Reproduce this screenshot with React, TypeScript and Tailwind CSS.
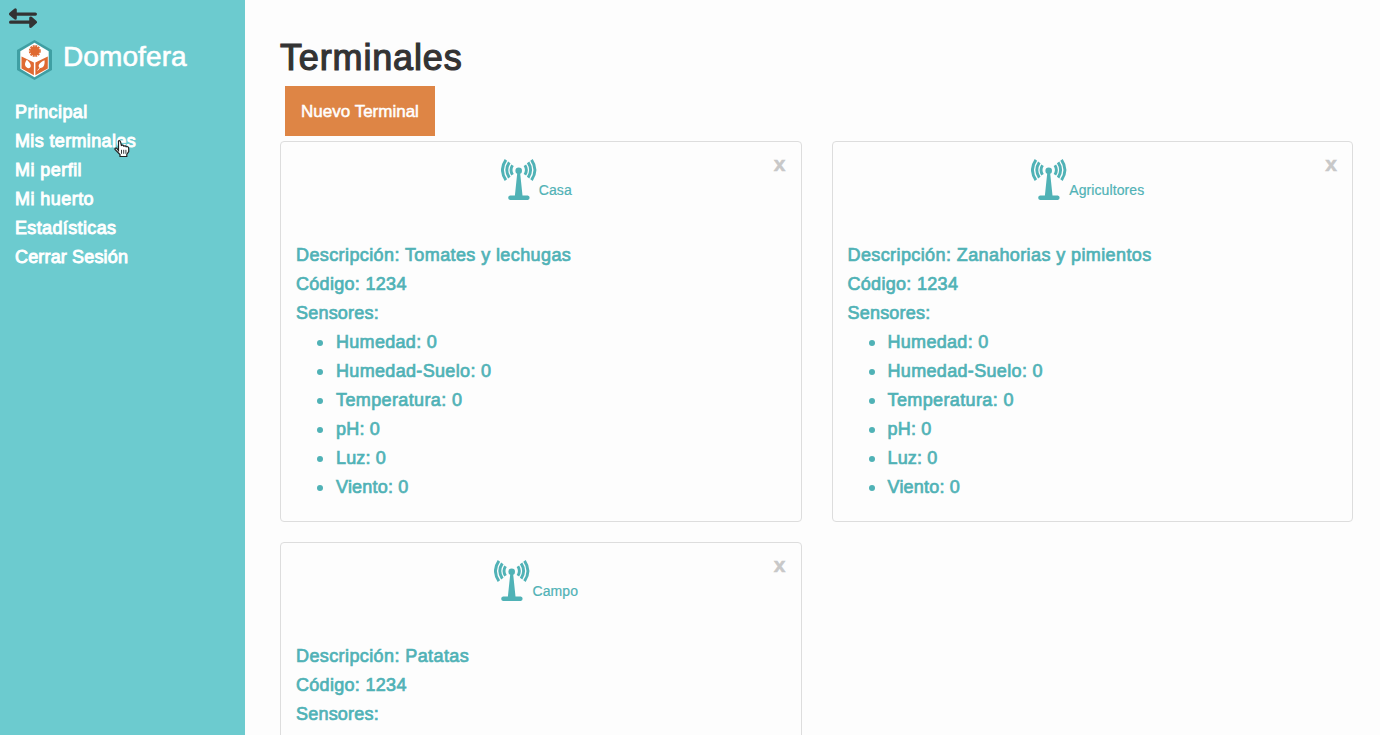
import React from "react";

type Terminal = { name: string; description: string; code: string };

const terminals: Terminal[] = [
  { name: "Casa", description: "Tomates y lechugas", code: "1234" },
  { name: "Agricultores", description: "Zanahorias y pimientos", code: "1234" },
  { name: "Campo", description: "Patatas", code: "1234" },
];

const sensors = [
  { label: "Humedad", spacing: "tracking-[0.3px]" },
  { label: "Humedad-Suelo", spacing: "tracking-[0.33px]" },
  { label: "Temperatura", spacing: "tracking-[0.38px]" },
  { label: "pH", spacing: "tracking-[0.2px]" },
  { label: "Luz", spacing: "tracking-[0.15px]" },
  { label: "Viento", spacing: "tracking-[0.2px]" },
];

const links = [
  { label: "Principal", spacing: "tracking-[0.4px]" },
  { label: "Mis terminales", spacing: "tracking-[0.36px]" },
  { label: "Mi perfil", spacing: "tracking-[0.45px]" },
  { label: "Mi huerto", spacing: "tracking-[0.45px]" },
  { label: "Estadísticas", spacing: "tracking-[0.36px]" },
  { label: "Cerrar Sesión", spacing: "tracking-[0.16px]" },
];

function ToggleIcon() {
  return (
    <svg width="28" height="20" viewBox="0 0 28 20" className="block" fill="#333" stroke="#333" strokeLinecap="round" strokeLinejoin="round">
      <path d="M1.500 6 6.300 1.800V10.200Z" strokeWidth="3" />
      <path d="M5 6.100H26.400M1.600 14.200H23" strokeWidth="3.200" />
      <path d="M26.500 14.200 21.700 10V18.400Z" strokeWidth="3" />
    </svg>
  );
}

function Logo() {
  return (
    <svg width="35" height="40" viewBox="0 0 35 40" className="block shrink-0">
      <path d="M17.500 0 35 10V30L17.500 40 0 30V10Z" fill="#3f9fa3" />
      <path d="M17.500 2.800 31.700 11.300V28.700L17.500 37.200 3.300 28.700V11.300Z" fill="#fff" />
      <circle cx="17.800" cy="11" r="4.800" fill="#df6a32" />
      <circle cx="17.800" cy="11" r="5.200" fill="none" stroke="#df6a32" strokeWidth="1.600" strokeDasharray="1.900 .823" />
      <path d="M4.500 16.500 16.900 22.500V35.300L4.500 28.600Z" fill="#df6a32" />
      <path d="M30.800 16.500 18.400 22.500V35.300L30.800 28.600Z" fill="#df6a32" />
      <path d="M9.800 19.800C11.500 21.500 13.800 23.500 13.800 25.800 13.800 28.300 11.300 28.800 9.500 27.300 7 25 8 22.500 9.800 19.800Z" fill="#fff" />
      <path d="M27.500 20.200C28.200 25.300 26 28.200 22.800 27.900 20.500 26.500 21.300 23 27.500 20.200Z" fill="#fff" />
      <path d="M20.600 30.500 23.500 27" stroke="#fff" strokeWidth=".8" />
    </svg>
  );
}

function AntennaIcon() {
  return (
    <svg width="36" height="42" viewBox="0 0 36 42" className="block shrink-0" fill="#50b2b6">
      <circle cx="17.700" cy="11.800" r="3.300" />
      <path d="M16.300 13.500H19.100L21.500 36.500H26.800a2.300 2.300 0 0 1 0 4.500H9a2.300 2.300 0 0 1 0-4.500H13.900Z" />
      <g fill="none" stroke="#50b2b6" strokeWidth="2.900">
        <path d="M11.500 6.200Q8.500 11 11.500 15.800M8.300 3.400Q3.300 11 8.300 18.600M4.900 .9Q-2 11 4.900 21.100" />
        <path d="M23.900 6.200Q26.900 11 23.900 15.800M27.100 3.400Q32.100 11 27.100 18.600M30.500 .9Q37.400 11 30.500 21.100" />
      </g>
    </svg>
  );
}

function HandCursor() {
  return (
    <svg width="16" height="18" viewBox="0 0 16 18" className="block">
      <path
        d="M4.500 10.500V2.200Q4.200.7 5.200.7T6.600 2.200L7.400 5.500Q9.200 4.600 9.800 6.100 11.500 5.200 12.200 6.800 14.700 6 14.700 8.800V11.500L12.800 14.500V16.500H6V14.500L1 9.500Q.7 7.800 2.600 8.100Z"
        fill="#fff"
        stroke="#222"
        strokeWidth="1.200"
      />
      <path d="M7.500 9.800V13.800M9.700 9.800V13.800M11.900 9.800V13.800" stroke="#222" strokeWidth=".9" />
    </svg>
  );
}

function TerminalCard({ terminal }: { terminal: Terminal }) {
  return (
    <article className="relative h-[381px] rounded-[4px] border border-[#ddd] px-[15px] pt-[17px] text-[#50b2b6]">
      <button className="absolute right-[15px] top-[10px] text-[21px] leading-6 font-bold text-[#c8c8c8] [-webkit-text-stroke:0.5px_#c8c8c8]">
        x
      </button>
      <header className="flex h-[82px] justify-center pr-[9px]">
        <AntennaIcon />
        <span className="ml-[2px] mt-[21px] text-[14px] leading-5 tracking-[0.1px] [-webkit-text-stroke:0.2px_#50b2b6]">
          {terminal.name}
        </span>
      </header>
      <div className="text-[18px] leading-[29px] [-webkit-text-stroke:0.7px_#50b2b6]">
        <p className="tracking-[0.4px]">Descripción: {terminal.description}</p>
        <p className="tracking-[0.3px]">Código: {terminal.code}</p>
        <p className="tracking-[0.2px]">Sensores:</p>
        <ul className="pl-[21px]">
          {sensors.map((s) => (
            <li key={s.label} className="flex items-center">
              <span className="mr-[13px] size-[6px] rounded-full bg-[#50b2b6]" />
              <span className={s.spacing}>{s.label}: 0</span>
            </li>
          ))}
        </ul>
      </div>
    </article>
  );
}

export default function App() {
  return (
    <div className="flex h-[735px] overflow-hidden bg-[#fdfdfd] font-['Liberation_Sans',sans-serif]">
      <aside className="w-[245px] shrink-0 bg-[#6ccbcf] text-white">
        <div className="pl-[9px] pt-[8px]">
          <ToggleIcon />
        </div>
        <div className="mt-[12px] flex pl-[17px]">
          <Logo />
          <span className="ml-[11px] text-[28px] leading-[34px] tracking-[0.1px] [-webkit-text-stroke:0.6px_white]">Domofera</span>
        </div>
        <nav className="relative mt-[18px] pl-[15px] text-[18px] leading-[29px] [-webkit-text-stroke:0.9px_white]">
          {links.map((l) => (
            <div key={l.label} className={l.spacing}>
              {l.label}
            </div>
          ))}
          <div className="pointer-events-none absolute left-[114px] top-[42px]">
            <HandCursor />
          </div>
        </nav>
      </aside>
      <main className="flex-1 pl-[35px] pr-[27px] pt-[38px]">
        <h1 className="h-[48px] text-[36px] leading-[40px] tracking-[0.85px] text-[#333] [-webkit-text-stroke:1.2px_#333]">
          Terminales
        </h1>
        <button className="ml-[5px] block h-[50px] w-[150px] bg-[#de8545] pt-px text-[17px] text-white [-webkit-text-stroke:0.5px_white]">
          Nuevo Terminal
        </button>
        <section className="mt-[5px] grid grid-cols-[521.5px_521.5px] gap-x-[30px] gap-y-[20px]">
          {terminals.map((t) => (
            <TerminalCard key={t.name} terminal={t} />
          ))}
        </section>
      </main>
    </div>
  );
}
